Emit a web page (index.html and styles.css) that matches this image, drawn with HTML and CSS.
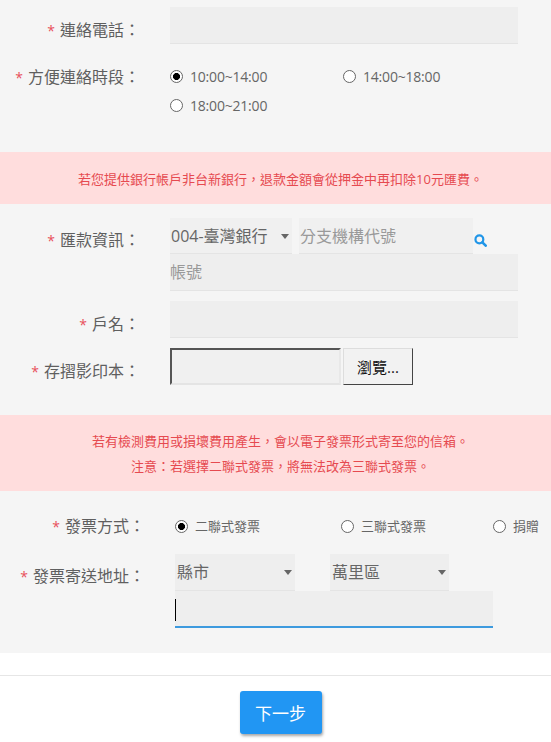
FILE: index.html
```html
<!DOCTYPE html>
<html lang="zh-Hant">
<head>
	<meta charset="UTF-8">
	<title>匯款資訊</title>
	<link rel="stylesheet" href="styles.css">
</head>
<body>
	<div class="section first">
		<div class="row phone-row">
			<label class="label"><em>*</em>連絡電話：</label>
			<div class="field"><input class="text full" type="text"></div>
		</div>
		<div class="row time-row">
			<label class="label"><em>*</em>方便連絡時段：</label>
			<div class="options">
				<label class="opt"><input type="radio" name="time" checked>10:00~14:00</label>
				<label class="opt"><input type="radio" name="time">14:00~18:00</label>
				<label class="opt"><input type="radio" name="time">18:00~21:00</label>
			</div>
		</div>
	</div>

	<div class="notice one">若您提供銀行帳戶非台新銀行，退款金額會從押金中再扣除10元匯費。</div>

	<div class="section second">
		<div class="row bank-row">
			<label class="label"><em>*</em>匯款資訊：</label>
			<div class="field">
				<div class="line">
					<div class="sel bank"><select><option>004-臺灣銀行</option></select></div>
					<input class="text branch" type="text" placeholder="分支機構代號">
					<svg class="search" width="13" height="13" viewBox="0 0 14 14"><circle cx="5.8" cy="5.8" r="4.2" fill="none" stroke="#2196e8" stroke-width="2.4"/><path d="M9 9l3.6 3.6" stroke="#2196e8" stroke-width="2.8" stroke-linecap="round"/></svg>
				</div>
				<input class="text full" type="text" placeholder="帳號">
			</div>
		</div>
		<div class="row name-row">
			<label class="label"><em>*</em>戶名：</label>
			<div class="field"><input class="text full" type="text"></div>
		</div>
		<div class="row file-row">
			<label class="label"><em>*</em>存摺影印本：</label>
			<div class="line">
				<input class="file-name" type="text">
				<button class="browse" type="button">瀏覽...</button>
			</div>
		</div>
	</div>

	<div class="notice two">
		<p>若有檢測費用或損壞費用產生，會以電子發票形式寄至您的信箱。</p>
		<p>注意：若選擇二聯式發票，將無法改為三聯式發票。</p>
	</div>

	<div class="section third">
		<div class="row invoice-row">
			<label class="label"><em>*</em>發票方式：</label>
			<div class="options small">
				<label class="opt"><input type="radio" name="inv" checked>二聯式發票</label>
				<label class="opt"><input type="radio" name="inv">三聯式發票</label>
				<label class="opt"><input type="radio" name="inv">捐贈</label>
			</div>
		</div>
		<div class="row addr-row">
			<label class="label"><em>*</em>發票寄送地址：</label>
			<div class="field">
				<div class="line city-line">
					<div class="sel city"><select><option>縣市</option></select></div>
					<div class="sel city"><select><option>萬里區</option></select></div>
				</div>
				<div class="addr-wrap">
					<input class="text addr" type="text">
					<span class="caret"></span>
				</div>
			</div>
		</div>
	</div>

	<div class="footer">
		<button class="next" type="button">下一步</button>
	</div>
</body>
</html>
```

FILE: styles.css
```css
*{
	margin: 0;
	padding: 0;
	box-sizing: border-box;
}
body{
	width: 551px;
	height: 742px;
	overflow: hidden;
	background-color: #fff;
	color: #666;
	font-family: "Open Sans", "Noto Sans CJK TC", sans-serif;
	font-size: 14px;
}
.section{
	background-color: #f5f5f5;
}
.first{
	height: 152px;
	padding-top: 7px;
}
.second{
	height: 211px;
	padding-top: 14px;
}
.third{
	height: 162px;
	padding-top: 23px;
}

.row{
	display: flex;
}
.label{
	width: 170px;
	padding-right: 30px;
	text-align: right;
	font-size: 16px;
	line-height: 24px;
	color: #5f5f5f;
	white-space: nowrap;
}
.label em{
	margin-right: 5px;
	font-size: 14px;
	font-style: normal;
	color: #e8505b;
}
.field{
	width: 348px;
}
.line{
	display: flex;
}

.text{
	display: block;
	height: 37px;
	border: 0;
	border-bottom: 1px solid #e4e4e4;
	background-color: #eee;
	font: inherit;
	font-size: 16px;
	color: #666;
	outline: none;
}
.text::placeholder{
	color: #999;
}
.full{
	width: 348px;
}

.phone-row .label{
	padding-top: 11px;
}
.time-row{
	margin-top: 21px;
}
.options{
	display: flex;
	flex-wrap: wrap;
	width: 348px;
	margin-top: -3px;
	color: #666;
	letter-spacing: -0.2px;
}
.opt{
	display: flex;
	align-items: center;
	flex: none;
	width: 173px;
	height: 29px;
	line-height: 29px;
	white-space: nowrap;
}
.opt input{
	appearance: none;
	width: 13px;
	height: 13px;
	margin-right: 7px;
	border: 1px solid #666;
	border-radius: 50%;
	background-color: #fff;
}
.opt input:checked{
	background: radial-gradient(circle, #000 3.2px, #fff 3.8px);
}

.notice{
	padding-left: 10px;
	background-color: #fdd;
	color: #e64a50;
	font-size: 13px;
	text-align: center;
}
.notice.one{
	height: 52px;
	padding-top: 17px;
	line-height: 20px;
}
.notice.two{
	height: 76px;
	padding-top: 14px;
	line-height: 25px;
}

.bank-row .label{
	padding-top: 10px;
}
.sel{
	position: relative;
}
.sel select{
	display: block;
	width: 100%;
	height: 37px;
	appearance: none;
	border: 0;
	border-bottom: 1px solid #e4e4e4;
	border-radius: 0;
	background-color: #eee;
	font: inherit;
	font-size: 16px;
	color: #666;
	padding-left: 2px;
}
.sel::after{
	content: "";
	position: absolute;
	right: 3px;
	top: 16px;
	border-top: 5px solid #666;
	border-left: 4px solid transparent;
	border-right: 4px solid transparent;
}
.bank{
	width: 122px;
	height: 36px;
}
.bank select{
	height: 36px;
	padding-left: 1px;
	background-color: #f0f0f0;
}
.branch{
	width: 174px;
	height: 36px;
	margin-left: 7px;
	padding-left: 1px;
	background-color: #f0f0f0;
}
.search{
	margin: 16px 0 0 1px;
}

.name-row{
	margin-top: 10px;
}
.name-row .label{
	padding-top: 11px;
}
.file-row{
	margin-top: 10px;
}
.file-row .label{
	padding-top: 11px;
}
.file-name{
	width: 171px;
	height: 37px;
	border-style: solid;
	border-width: 2px;
	border-color: #555 #e8e8e8 #e4e4e4 #555;
	background-color: #f0f0f0;
}
.browse{
	width: 70px;
	height: 37px;
	margin-left: 2px;
	border: 1px solid #444;
	border-top-color: #ddd;
	border-left-color: #ddd;
	background-color: #f2f2f2;
	color: #111;
	font: inherit;
	font-size: 15px;
}

.invoice-row .label,
.addr-row .label{
	padding-right: 25px;
}
.small{
	width: 376px;
	margin: 2px 0 0 5px;
	flex-wrap: nowrap;
	font-size: 13px;
	letter-spacing: 0;
}
.small .opt{
	width: 166px;
	height: 20px;
	line-height: 20px;
}
.small .opt:nth-child(2){
	width: 152px;
}
.small .opt:nth-child(3){
	width: 58px;
}
.addr-row{
	margin-top: 15px;
}
.addr-row .label{
	padding-top: 10px;
}
.addr-row .field{
	margin-left: 5px;
}
.city{
	width: 119px;
}
.city:first-child{
	width: 120px;
}
.city + .city{
	margin-left: 35px;
}
.addr-wrap{
	position: relative;
}
.addr{
	width: 318px;
	height: 37px;
	border-bottom: 2px solid #3d9ade;
}
.caret{
	position: absolute;
	left: 0;
	top: 8px;
	width: 1px;
	height: 22px;
	background-color: #000;
}

.footer{
	margin-top: 22px;
	padding-top: 15px;
	border-top: 1px solid #e6e6e6;
	text-align: center;
}
.next{
	width: 82px;
	height: 43px;
	margin-left: 10px;
	border: 0;
	border-radius: 3px;
	background-color: #2196f3;
	box-shadow: 1px 2px 3px rgba(0, 0, 0, 0.35);
	color: #fff;
	font: inherit;
	font-size: 17px;
}
```
